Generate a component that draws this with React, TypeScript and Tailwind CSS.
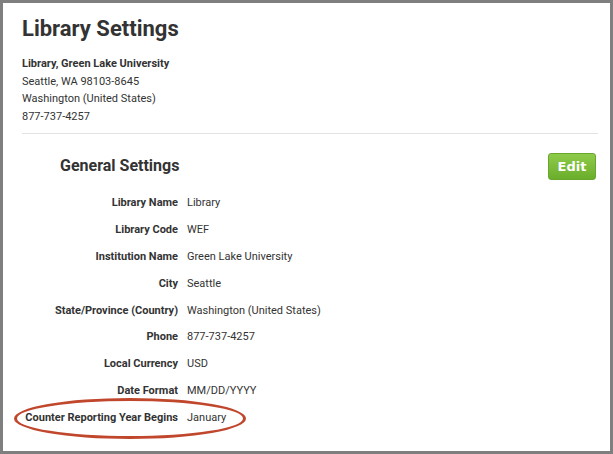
const rows: [string, string][] = [
  ["Library Name", "Library"],
  ["Library Code", "WEF"],
  ["Institution Name", "Green Lake University"],
  ["City", "Seattle"],
  ["State/Province (Country)", "Washington (United States)"],
  ["Phone", "877-737-4257"],
  ["Local Currency", "USD"],
  ["Date Format", "MM/DD/YYYY"],
  ["Counter Reporting Year Begins", "January"],
];

export default function App() {
  return (
    <div className="w-[613px] h-[454px] border-[3px] border-[#7f7f7f] bg-white text-[#333] font-['Roboto',sans-serif] overflow-hidden">
      <div className="px-[19px] pt-[12px]">
        <h1 className="text-[22px] font-bold leading-[28px] text-[#333]">Library Settings</h1>
        <div className="mt-[12px] text-[11px] leading-[17.7px]">
          <div className="font-bold">Library, Green Lake University</div>
          <div>Seattle, WA 98103-8645</div>
          <div>Washington (United States)</div>
          <div>877-737-4257</div>
        </div>
        <div className="mt-[7px] h-px bg-[#e3e3e3] w-[576px]" />
        <div className="flex items-center justify-between mt-[19px] w-[574px]">
          <h2 className="ml-[38px] text-[16px] font-bold leading-[22px]">General Settings</h2>
          <button className="h-[27px] w-[48px] rounded-[3px] border border-[#6aa52c] bg-gradient-to-b from-[#8fcb4a] to-[#6aae2b] text-white text-[13px] font-semibold font-['DejaVu_Sans',sans-serif]">
            Edit
          </button>
        </div>
        <div className="mt-[10px] flex flex-col">
          {rows.map(([label, value], i) => (
            <div key={label} className="relative flex h-[26.9px] items-center text-[11px]">
              <div className="w-[156px] text-right font-bold whitespace-nowrap">{label}</div>
              <div className="ml-[9px]">{value}</div>
              {i === rows.length - 1 && (
                <div className="absolute left-[-8px] top-[-7px] w-[232px] h-[41px] rounded-[50%] border-[3px] border-[#c0462c]" />
              )}
            </div>
          ))}
        </div>
      </div>
    </div>
  );
}
